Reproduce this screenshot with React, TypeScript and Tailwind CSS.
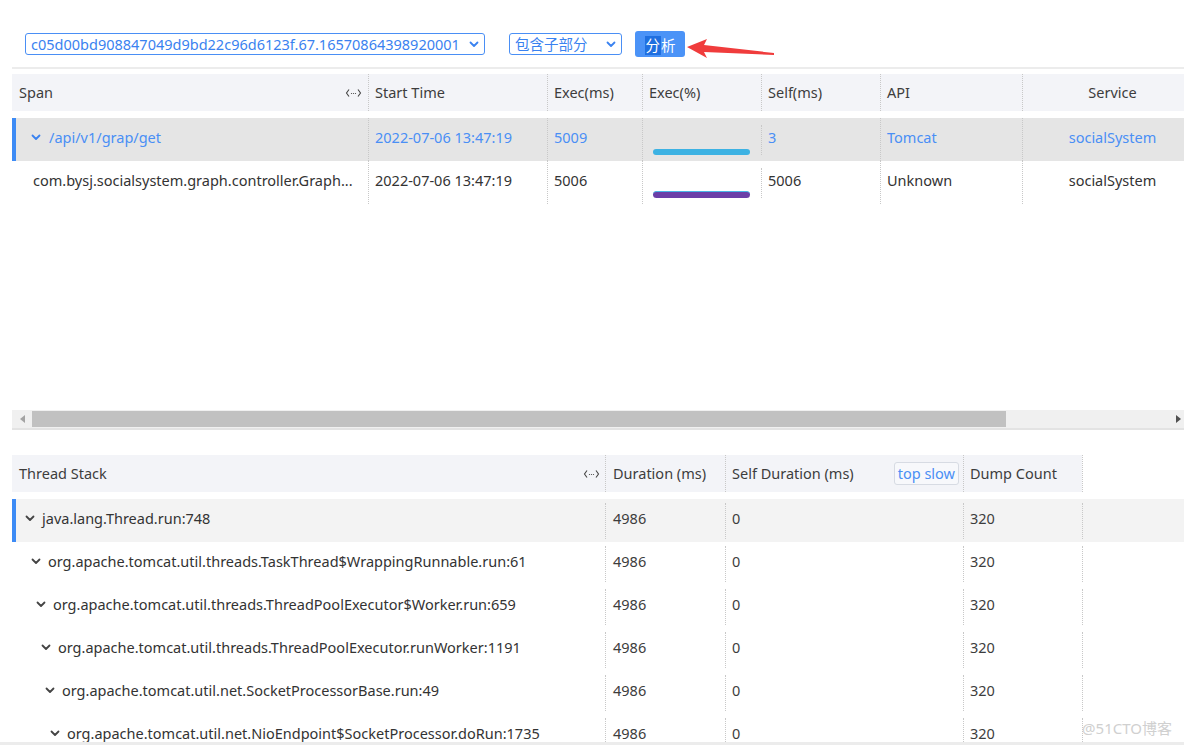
import React from 'react';

const FONT = { fontFamily: '"Noto Sans", "Noto Sans CJK SC", sans-serif' };

const dot = 'shrink-0 border-l border-dotted border-[#c8c8c8]';

const ChevronDownSmall: React.FC<{ className?: string }> = ({ className }) => (
  <svg width="10" height="7" viewBox="0 0 10 7" className={className}>
    <path d="M1.5 1.5 L5 5 L8.5 1.5" fill="none" stroke="currentColor" strokeWidth="1.8" strokeLinecap="round" strokeLinejoin="round" />
  </svg>
);

const Resize: React.FC = () => (
  <svg width="17" height="10" viewBox="0 0 17 10" className="text-[#444]">
    <path d="M4 1.5 L1.5 5 L4 8.5" fill="none" stroke="currentColor" strokeWidth="1.1" />
    <path d="M13 1.5 L15.5 5 L13 8.5" fill="none" stroke="currentColor" strokeWidth="1.1" />
    <circle cx="6.5" cy="5.5" r="0.6" fill="currentColor" />
    <circle cx="8.5" cy="5.5" r="0.6" fill="currentColor" />
    <circle cx="10.5" cy="5.5" r="0.6" fill="currentColor" />
  </svg>
);

const spanRows = [
  { span: '/api/v1/grap/get', start: '2022-07-06 13:47:19', exec: '5009', self: '3', api: 'Tomcat', service: 'socialSystem', active: true },
  { span: 'com.bysj.socialsystem.graph.controller.Graph...', start: '2022-07-06 13:47:19', exec: '5006', self: '5006', api: 'Unknown', service: 'socialSystem', active: false },
];

const stackRows = [
  'java.lang.Thread.run:748',
  'org.apache.tomcat.util.threads.TaskThread$WrappingRunnable.run:61',
  'org.apache.tomcat.util.threads.ThreadPoolExecutor$Worker.run:659',
  'org.apache.tomcat.util.threads.ThreadPoolExecutor.runWorker:1191',
  'org.apache.tomcat.util.net.SocketProcessorBase.run:49',
  'org.apache.tomcat.util.net.NioEndpoint$SocketProcessor.doRun:1735',
];

const indents = ['pl-[9px]', 'pl-[19px]', 'pl-[24px]', 'pl-[29px]', 'pl-[33px]', 'pl-[38px]'];

export default function App() {
  return (
    <div style={FONT} className="relative w-[1184px] h-[745px] overflow-hidden bg-white text-[14.5px] text-[#3d3d3d]">
      {/* toolbar */}
      <div className="flex items-center h-[26px] mt-[31px] pl-[25px]">
        <div className="flex items-center justify-between w-[460px] h-[22px] border border-[#4a8ff5] rounded-[3px] pl-[5px] pr-[5px] pt-[1px] text-[#3a82f0]">
          <span className="leading-none">c05d00bd908847049d9bd22c96d6123f.67.16570864398920001</span>
          <ChevronDownSmall className="text-[#3a82f0]" />
        </div>
        <div className="flex items-center justify-between w-[113px] h-[22px] ml-[24px] border border-[#4a8ff5] rounded-[3px] pl-[5px] pr-[5px] pt-[1px] text-[#3a82f0]">
          <span className="leading-none">包含子部分</span>
          <ChevronDownSmall className="text-[#3a82f0]" />
        </div>
        <div className="relative ml-[13px]">
          <button className="flex items-center justify-center w-[50px] h-[26px] pt-[3px] rounded-[3px] bg-[#4b93f7] text-white leading-none">
            <span className="bg-[#1f6fe0] px-[1px] py-[2px]">分</span>
            <span>析</span>
          </button>
          {/* red arrow annotation */}
          <svg className="absolute left-[51px] top-[7px]" width="90" height="22" viewBox="0 0 90 22">
            <polygon points="1,9 21,1 18,7 88,15 88,17 18,14 21,20" fill="#f03c3c" />
          </svg>
        </div>
      </div>

      <div className="ml-[12px] mt-[10px] h-[2px] bg-[#ececec]" />

      {/* span table */}
      <div className="ml-[12px] mt-[5px] overflow-hidden">
        <div className="flex h-[37px] items-center bg-[#f3f4f8]">
          <div className="shrink-0 flex items-center justify-between w-[356px] pl-[7px] pr-[6px]">
            <span>Span</span>
            <Resize />
          </div>
          <div className={`w-[179px] h-full flex items-center pl-[6px] ${dot}`}>Start Time</div>
          <div className={`w-[95px] h-full flex items-center pl-[6px] ${dot}`}>Exec(ms)</div>
          <div className={`w-[119px] h-full flex items-center pl-[6px] ${dot}`}>Exec(%)</div>
          <div className={`w-[119px] h-full flex items-center pl-[6px] ${dot}`}>Self(ms)</div>
          <div className={`w-[142px] h-full flex items-center pl-[6px] ${dot}`}>API</div>
          <div className={`w-[180px] h-full flex items-center justify-center ${dot}`}>Service</div>
        </div>
        <div className="mt-[7px]">
          {spanRows.map((r) => (
            <div key={r.exec} className={`flex h-[43px] items-center ${r.active ? 'bg-[#e5e5e5] border-l-[4px] border-[#3d8bf5] text-[#4a8ff5]' : 'text-[#333]'}`}>
              <div className={`shrink-0 flex items-center pb-[4px] ${r.active ? 'w-[352px] pl-[15px]' : 'w-[356px] pl-[21px]'}`}>
                {r.active && <ChevronDownSmall className="mr-[8px] text-[#3a82f0]" />}
                <span>{r.span}</span>
              </div>
              <div className={`w-[179px] h-full flex items-center pl-[6px] pb-[4px] ${dot}`}>{r.start}</div>
              <div className={`w-[95px] h-full flex items-center pl-[6px] pb-[4px] ${dot}`}>{r.exec}</div>
              <div className={`w-[119px] h-full flex items-end pb-[6px] pl-[10px] ${dot}`}>
                {r.active ? (
                  <div className="w-[97px] h-[6px] rounded-full bg-[#3db2e3]" />
                ) : (
                  <div className="w-[97px] h-[7px] rounded-full bg-[#6b3fa8] border-t border-[#4ab6e6]" />
                )}
              </div>
              <div className={`w-[119px] h-[30px] flex items-center pl-[6px] pb-[3px] ${dot}`}>{r.self}</div>
              <div className={`w-[142px] h-full flex items-center pl-[6px] pb-[4px] ${dot}`}>{r.api}</div>
              <div className={`w-[180px] h-full flex items-center justify-center pb-[4px] ${dot}`}>{r.service}</div>
            </div>
          ))}
        </div>
      </div>

      {/* horizontal scrollbar */}
      <div className="ml-[12px] mt-[206px] flex items-center h-[20px] bg-[#f0f0f0] border-b-[2px] border-[#e3e3e3]">
        <div className="w-[20px] flex items-center justify-center">
          <svg width="5" height="8" viewBox="0 0 5 8"><polygon points="5,0 0,4 5,8" fill="#a3a3a3" /></svg>
        </div>
        <div className="w-[974px] h-[16px] bg-[#c1c1c1]" />
        <div className="flex-1 flex items-center justify-end pr-[3px]">
          <svg width="5" height="8" viewBox="0 0 5 8"><polygon points="0,0 5,4 0,8" fill="#505050" /></svg>
        </div>
      </div>

      {/* thread stack table */}
      <div className="ml-[12px] mt-[25px]">
        <div className="flex h-[37px] items-center">
          <div className="shrink-0 flex items-center justify-between w-[593px] h-full pl-[7px] pr-[5px] bg-[#f3f4f8]">
            <span>Thread Stack</span>
            <Resize />
          </div>
          <div className={`w-[120px] h-full flex items-center pl-[7px] bg-[#f3f4f8] ${dot}`}>Duration (ms)</div>
          <div className={`w-[238px] h-full flex items-center justify-between pl-[6px] pr-[4px] bg-[#f3f4f8] ${dot}`}>
            <span>Self Duration (ms)</span>
            <span className="border border-[#d7dbe3] rounded-[3px] px-[3px] h-[23px] flex items-center text-[#4a8ff5] bg-[#f7f8fb]">top slow</span>
          </div>
          <div className={`w-[119px] h-full flex items-center pl-[6px] bg-[#f3f4f8] ${dot}`}>Dump Count</div>
          <div className={`h-full ${dot}`} />
        </div>
        <div className="mt-[7px]">
          {stackRows.map((name, i) => (
            <div key={name} className={`flex h-[43px] items-center ${i === 0 ? 'bg-[#f3f3f3]' : ''}`}>
              <div className={`shrink-0 flex items-center w-[593px] h-full pb-[4px] ${i === 0 ? 'border-l-[4px] border-[#3d8bf5]' : ''} ${indents[i]}`}>
                <ChevronDownSmall className="mr-[7px] text-[#444]" />
                <span className="text-[#333]">{name}</span>
              </div>
              <div className={`w-[120px] h-[36px] flex items-center pl-[7px] pb-[4px] ${dot}`}>4986</div>
              <div className={`w-[238px] h-[36px] flex items-center pl-[6px] pb-[4px] ${dot}`}>0</div>
              <div className={`w-[119px] h-[36px] flex items-center pl-[6px] pb-[4px] ${dot}`}>320</div>
              <div className={`flex-1 h-[36px] ${dot}`} />
            </div>
          ))}
        </div>
      </div>

      <div className="absolute left-0 right-0 bottom-0 h-[3px] bg-[#ececec]" />
      <div className="absolute right-[12px] bottom-[6px] text-[15px] text-[#d0d0d0]">@51CTO博客</div>
    </div>
  );
}
